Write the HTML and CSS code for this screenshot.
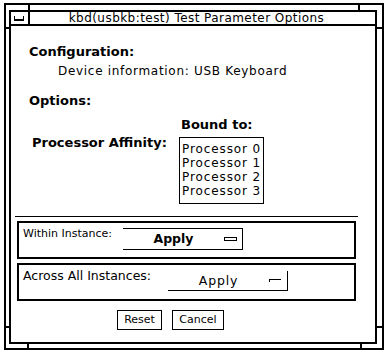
FILE: index.html
```html
<!DOCTYPE html>
<html>
<head>
<meta charset="utf-8">
<link rel="stylesheet" href="styles.css">
</head>
<body>
<div class="frame">
  <span class="tick tick-top tl"></span>
  <span class="tick tick-top tr"></span>
  <span class="tick tick-bot bl"></span>
  <span class="tick tick-bot br"></span>
  <span class="tick tick-left lt"></span>
  <span class="tick tick-left lb"></span>
  <span class="tick tick-right rt"></span>
  <span class="tick tick-right rb"></span>
  <div class="win">
    <div class="titlebar">
      <div class="closebox"><span class="closeglyph"></span></div>
      <div class="title">kbd(usbkb:test) Test Parameter Options</div>
    </div>
    <div class="content">
      <div class="heading config">Configuration:</div>
      <div class="devinfo">Device information: USB Keyboard</div>
      <div class="options">Options:</div>
      <div class="affinity">
        <div class="aff-label">Processor Affinity:</div>
        <div class="bound">
          <div class="bound-label">Bound to:</div>
          <ul class="listbox">
            <li>Processor 0</li>
            <li>Processor 1</li>
            <li>Processor 2</li>
            <li>Processor 3</li>
          </ul>
        </div>
      </div>
      <div class="sep"></div>
      <div class="group g1">
        <div class="glabel">Within Instance:</div>
        <div class="optmenu om1"><span class="omtext">Apply</span><span class="omglyph"></span></div>
      </div>
      <div class="group g2">
        <div class="glabel">Across All Instances:</div>
        <div class="optmenu om2"><span class="omtext">Apply</span><span class="omglyph"></span></div>
      </div>
      <div class="buttons">
        <button class="btn reset">Reset</button>
        <button class="btn cancel">Cancel</button>
      </div>
    </div>
  </div>
</div>
</body>
</html>
```

FILE: styles.css
```css
* { box-sizing: border-box; }
html, body { margin: 0; padding: 0; background: #fff; }
body {
  font-family: "DejaVu Sans", sans-serif;
  color: #000;
  width: 388px;
  height: 356px;
  overflow: hidden;
}
.frame {
  position: relative;
  margin: 3px 0 0 4px;
  width: 380px;
  height: 347px;
  border: 2px solid #000;
  padding: 5px 5px 4px 3px;
}
.tick { position: absolute; background: #000; display: block; }
.tick-top { top: 0; width: 2px; height: 5px; }
.tick-bot { bottom: 0; width: 2px; height: 4px; }
.tl { left: 22px; }
.tr { left: 352px; }
.bl { left: 21px; }
.br { left: 354px; }
.tick-left { left: 0; width: 3px; height: 2px; }
.tick-right { right: 0; width: 5px; height: 2px; }
.lt, .rt { top: 22px; }
.lb, .rb { top: 321px; }

.win {
  height: 100%;
  border: 2px solid #000;
  display: flex;
  flex-direction: column;
}
.titlebar {
  height: 14px;
  border-bottom: 2px solid #000;
  display: flex;
  flex: none;
}
.closebox {
  width: 19px;
  border-right: 2px solid #000;
  flex: none;
  padding: 4px 0 0 3px;
}
.closeglyph {
  display: block;
  width: 10px;
  height: 5px;
  border: 1px solid #000;
  border-top: 0;
  border-bottom-width: 2px;
}
.title {
  flex: 1;
  text-align: center;
  font-size: 12px;
  line-height: 12px;
  letter-spacing: 0.45px;
  padding-right: 12px;
  white-space: nowrap;
}
.content {
  flex: 1;
  padding-left: 18px;
}
.config {
  margin-top: 18px;
  font-weight: bold;
  font-size: 13px;
  line-height: 16px;
}
.devinfo {
  margin-top: 3px;
  padding-left: 29px;
  font-size: 12px;
  line-height: 16px;
  letter-spacing: 0.7px;
}
.options {
  margin-top: 14px;
  font-size: 13px;
  line-height: 16px;
  font-weight: 600;
}
.affinity {
  margin-top: 8px;
  display: flex;
}
.aff-label {
  width: 150px;
  flex: none;
  margin-top: 18px;
  padding-left: 3px;
  font-weight: bold;
  font-size: 13px;
  line-height: 16px;
}
.bound-label {
  padding-left: 2px;
  font-weight: bold;
  font-size: 13px;
  line-height: 16px;
}
.listbox {
  list-style: none;
  margin: 4px 0 0 0;
  width: 85px;
  border: 1px solid #000;
  padding: 4px 0 5px 2px;
  font-size: 12px;
  line-height: 14px;
  letter-spacing: 0.9px;
}
.listbox li { white-space: nowrap; }
.sep {
  margin: 12px 0 0 -14px;
  width: 343px;
  border-top: 1px solid #000;
}
.group {
  margin: 4px 0 0 -12px;
  width: 339px;
  height: 38px;
  border: 2px solid #000;
  display: flex;
  align-items: flex-start;
  padding-left: 4px;
}
.glabel {
  flex: none;
  margin-top: 4px;
  line-height: 14px;
  white-space: nowrap;
}
.g1 .glabel { width: 100px; font-size: 11px; }
.g2 .glabel { width: 145px; font-size: 12.5px; font-weight: 500; }
.optmenu {
  display: flex;
  align-items: center;
  width: 120px;
  border-right: 1px solid #000;
  border-bottom: 1px solid #000;
}
.om1 {
  margin-top: 5px;
  height: 22px;
  border-top: 1px solid #000;
}
.om2 {
  margin-top: 6px;
  height: 20px;
}
.omtext {
  flex: 1;
  text-align: center;
  font-size: 12.5px;
  line-height: 14px;
}
.om1 .omtext { font-weight: bold; }
.om2 .omtext { letter-spacing: 0.8px; }
.om1 .omglyph {
  width: 13px;
  height: 4px;
  border: 1px solid #000;
  margin-right: 5px;
}
.om2 .omglyph {
  width: 12px;
  height: 3px;
  border-top: 1px solid #000;
  border-left: 1px solid #000;
  margin-right: 6px;
  margin-top: -1px;
}
.buttons {
  margin: 9px 0 0 88px;
  display: flex;
  gap: 10px;
}
.btn {
  font-family: "DejaVu Sans", sans-serif;
  font-size: 11px;
  height: 20px;
  border: 1px solid #000;
  background: #fff;
  color: #000;
  padding: 0;
  border-radius: 0;
  line-height: 18px;
}
.reset { width: 45px; }
.cancel { width: 52px; }
```
